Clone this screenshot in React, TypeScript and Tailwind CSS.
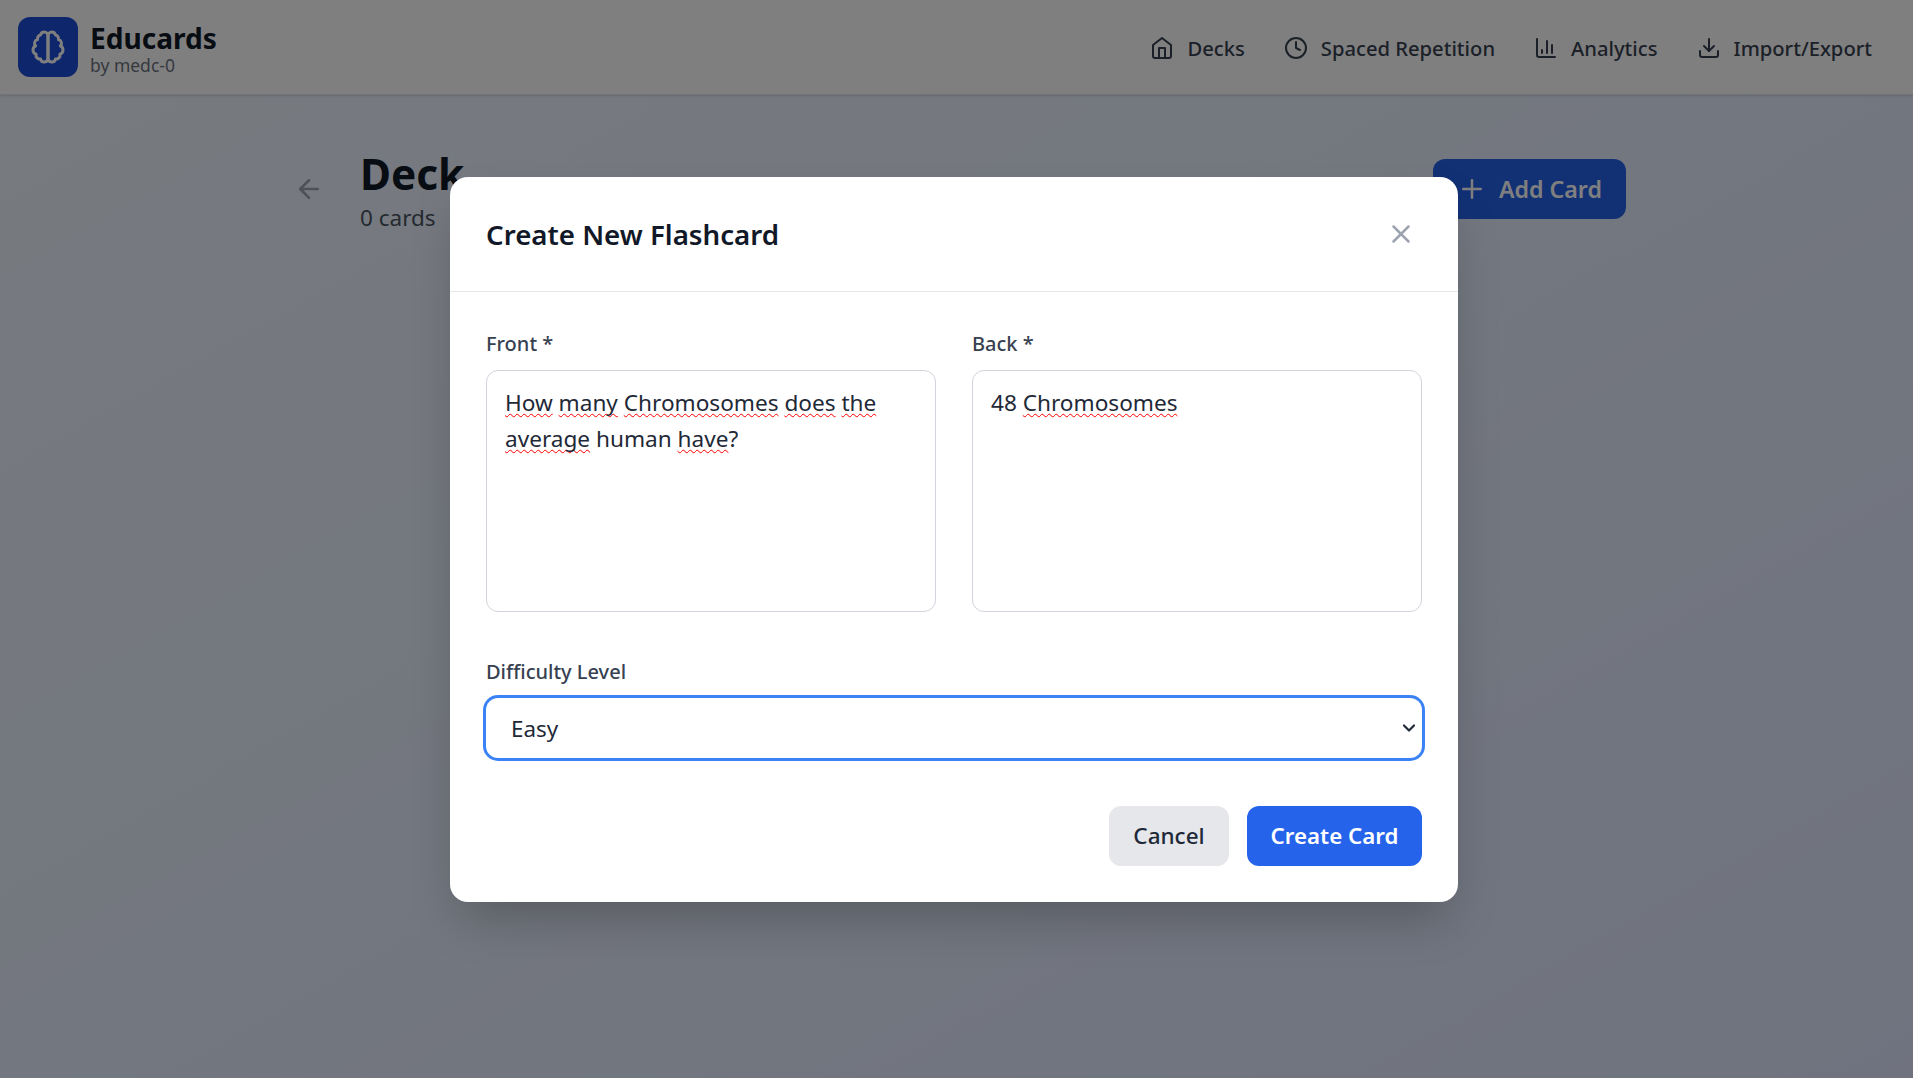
import React from "react";
import { Clock, Download, ChartColumn, ArrowLeft, Plus, X, ChevronDown } from "lucide-react";

const F = "[font-family:'Noto_Sans',sans-serif]";

function Brain() {
  return (
    <svg width="36" height="36" viewBox="0 0 24 24" fill="none" stroke="white" strokeWidth="2" strokeLinecap="round" strokeLinejoin="round">
      <path d="M9.5 2A2.5 2.5 0 0 1 12 4.5v15a2.5 2.5 0 0 1-4.96.44 2.5 2.5 0 0 1-2.96-3.08 3 3 0 0 1-.34-5.58 2.5 2.5 0 0 1 1.32-4.24 2.5 2.5 0 0 1 1.98-3A2.5 2.5 0 0 1 9.5 2Z" />
      <path d="M14.5 2A2.5 2.5 0 0 0 12 4.5v15a2.5 2.5 0 0 0 4.96.44 2.5 2.5 0 0 0 2.96-3.08 3 3 0 0 0 .34-5.58 2.5 2.5 0 0 0-1.32-4.24 2.5 2.5 0 0 0-1.98-3A2.5 2.5 0 0 0 14.5 2Z" />
    </svg>
  );
}

function Home() {
  return (
    <svg width="24" height="24" viewBox="0 0 24 24" fill="none" stroke="currentColor" strokeWidth="2" strokeLinecap="round" strokeLinejoin="round">
      <path d="m3 9 9-7 9 7v11a2 2 0 0 1-2 2H5a2 2 0 0 1-2-2z" />
      <polyline points="9 22 9 12 15 12 15 22" />
    </svg>
  );
}

function Sp({ children }: { children: React.ReactNode }) {
  return <span className="underline decoration-wavy decoration-[#ff0000] decoration-[1.4px] [text-decoration-skip-ink:none] underline-offset-[2px]">{children}</span>;
}

function NavItem({ icon, label }: { icon: React.ReactNode; label: string }) {
  return (
    <a className="flex items-center gap-[13px] text-[20.2px] font-medium leading-[30px] text-[#374151]">
      {icon}
      <span>{label}</span>
    </a>
  );
}

export default function App() {
  return (
    <div className={`${F} relative min-h-screen h-[1078px] overflow-hidden bg-linear-to-br from-blue-50 to-indigo-100`}>
      <header className="flex h-[95px] items-center justify-between border-b border-[#e5e7eb] bg-white pl-[18px] pr-[41px] shadow-sm">
        <div className="flex items-center gap-[12px]">
          <div className="flex h-[60px] w-[60px] items-center justify-center rounded-[12px] bg-[#1d4ed8]">
            <Brain />
          </div>
          <div className="pt-[2px]">
            <div className="text-[28.1px] font-bold leading-[33px] text-[#111827]">Educards</div>
            <div className="text-[17.5px] leading-[20px] text-[#6b7280]">by medc-0</div>
          </div>
        </div>
        <nav className="flex items-center gap-[39px] pt-[2px]">
          <NavItem icon={<Home />} label="Decks" />
          <NavItem icon={<Clock size={24} />} label="Spaced Repetition" />
          <NavItem icon={<ChartColumn size={24} />} label="Analytics" />
          <NavItem icon={<Download size={24} />} label="Import/Export" />
        </nav>
      </header>

      <div className="pr-[5px]">
        <main className="mx-auto flex w-[1344px] items-center justify-between pt-[46px]">
          <div className="flex items-center gap-[36px] pl-[12px]">
            <ArrowLeft size={30} strokeWidth={2} className="text-[#9ca3af]" />
            <div className="pt-[7px]">
              <h1 className="text-[42.3px] font-bold leading-[52px] text-[#111827]">Deck</h1>
              <p className="text-[22.5px] leading-[36px] text-[#4b5563]">0 cards</p>
            </div>
          </div>
          <button className="flex h-[60px] items-center gap-[12px] rounded-[12px] bg-[#2563eb] pl-[24px] pr-[24px] text-[23.2px] font-semibold text-white">
            <Plus size={30} strokeWidth={2} />
            <span className="pt-[2px]">Add Card</span>
          </button>
        </main>
      </div>

      <div className="absolute inset-0 flex items-start justify-center bg-black/50 pt-[177px] pr-[5px]">
        <div className="w-[1008px] rounded-[18px] bg-white shadow-2xl">
          <div className="flex h-[115px] items-center justify-between border-b border-[#e5e7eb] pl-[36px] pr-[42px]">
            <h2 className="text-[27.7px] font-semibold leading-[45px] text-[#111827]">Create New Flashcard</h2>
            <X size={30} className="text-[#9ca3af]" />
          </div>
          <div className="px-[36px] pt-[37px] pb-[36px]">
            <div className="grid grid-cols-2 gap-[36px]">
              <div>
                <label className="mb-[11px] block text-[20px] font-medium leading-[30px] text-[#374151]">Front *</label>
                <div className="h-[242px] rounded-[12px] border border-[#d1d5db] px-[18px] py-[14px] text-[22.6px] leading-[36px] text-[#1f2937]">
                  <Sp>How</Sp> <Sp>many</Sp> <Sp>Chromosomes</Sp> <Sp>does</Sp> <Sp>the</Sp> <Sp>average</Sp> human <Sp>have</Sp>?
                </div>
              </div>
              <div>
                <label className="mb-[11px] block text-[20px] font-medium leading-[30px] text-[#374151]">Back *</label>
                <div className="h-[242px] rounded-[12px] border border-[#d1d5db] px-[18px] py-[14px] text-[22.6px] leading-[36px] text-[#1f2937]">
                  48 <Sp>Chromosomes</Sp>
                </div>
              </div>
            </div>
            <label className="mt-[45px] mb-[11px] block text-[20px] font-medium leading-[30px] text-[#374151]">Difficulty Level</label>
            <div className="relative">
              <select defaultValue="Easy" className="block h-[60px] w-full appearance-none rounded-[12px] bg-white pl-[25px] pr-[22px] pt-[2px] text-[22.4px] text-[#1f2937] outline-none ring-[3px] ring-[#3b82f6]">
                <option>Easy</option>
                <option>Medium</option>
                <option>Hard</option>
              </select>
              <ChevronDown size={20} strokeWidth={2.6} className="pointer-events-none absolute right-[3px] top-[20px] text-[#1f2937]" />
            </div>
            <div className="mt-[48px] flex justify-end gap-[18px]">
              <button className="h-[60px] w-[120px] rounded-[12px] bg-[#e5e7eb] text-[22.5px] font-medium text-[#1f2937]">Cancel</button>
              <button className="h-[60px] w-[175px] rounded-[12px] bg-[#2563eb] text-[22.3px] font-semibold text-white">Create Card</button>
            </div>
          </div>
        </div>
      </div>
    </div>
  );
}
